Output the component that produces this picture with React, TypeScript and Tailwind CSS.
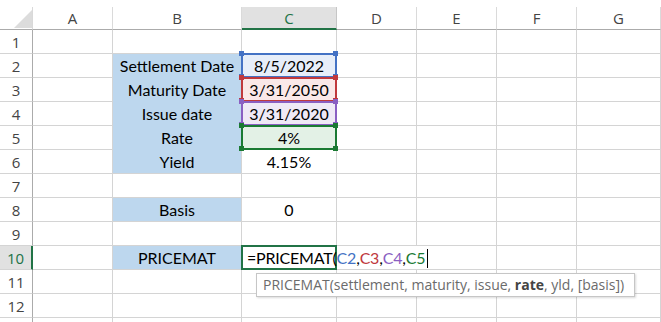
import React from 'react'

const cols = [
  { key: 'hdr', w: 'w-[33px]' },
  { key: 'A', w: 'w-[80px]' },
  { key: 'B', w: 'w-[129px]' },
  { key: 'C', w: 'w-[95px]' },
  { key: 'D', w: 'w-[80px]' },
  { key: 'E', w: 'w-[80px]' },
  { key: 'F', w: 'w-[80px]' },
  { key: 'G', w: 'w-[84px]' },
]

const labels: Record<number, string> = {
  2: 'Settlement Date',
  3: 'Maturity Date',
  4: 'Issue date',
  5: 'Rate',
  6: 'Yield',
  8: 'Basis',
  10: 'PRICEMAT',
}

const values: Record<number, string> = {
  2: '8/5/2022',
  3: '3/31/2050',
  4: '3/31/2020',
  5: '4%',
  6: '4.15%',
  8: '0',
}

// range highlight per row in column C
const ranges: Record<number, { bg: string; border: string; handle: string }> = {
  2: { bg: 'bg-[#e7eef9]', border: 'border-[#4472c4]', handle: 'bg-[#4472c4]' },
  3: { bg: 'bg-[#fae8e8]', border: 'border-[#c0393d]', handle: 'bg-[#c0393d]' },
  4: { bg: 'bg-[#efe9f6]', border: 'border-[#8a5fc2]', handle: 'bg-[#8a5fc2]' },
  5: { bg: 'bg-[#e3f1e6]', border: 'border-[#1a7a33]', handle: 'bg-[#1a7a33]' },
}

const cellFont = "font-['Lato','Liberation_Sans',sans-serif] text-[16px] leading-[22px] text-black"
const hdrFont = "font-['Open_Sans','Liberation_Sans',sans-serif] text-[15px]"

function RangeBox({ border, handle }: { border: string; handle: string }) {
  return (
    <>
      <div className={`absolute -left-px -top-px w-[96px] h-[25px] border-2 ${border} z-10`} />
      <div className={`absolute -left-[3px] -top-[3px] w-[5px] h-[5px] ${handle} z-10`} />
      <div className={`absolute left-[91px] -top-[3px] w-[5px] h-[5px] ${handle} z-10`} />
      <div className={`absolute -left-[3px] top-[20px] w-[5px] h-[5px] ${handle} z-10`} />
      <div className={`absolute left-[91px] top-[20px] w-[5px] h-[5px] ${handle} z-10`} />
    </>
  )
}

function FormulaCell() {
  return (
    <>
      {/* edit box covers gridlines of the cells the formula runs into */}
      <div className="absolute left-0 top-0 h-[23px] w-[190px] bg-white z-20" />
      <div className="absolute -left-px -top-px w-[96px] h-[25px] border-2 border-[#217346] z-30" />
      <div className={`absolute left-0 top-0 h-[23px] z-[35] flex items-end pl-[5px] whitespace-nowrap tracking-[-0.2px] ${cellFont}`}>
        <span>=PRICEMAT(</span>
        <span className="text-[#4472c4]">C2</span>
        <span>,</span>
        <span className="text-[#c0393d]">C3</span>
        <span>,</span>
        <span className="text-[#8a5fc2]">C4</span>
        <span>,</span>
        <span className="text-[#1a7a33]">C5</span>
        <span className="inline-block w-px h-[19px] bg-black ml-[2px] mb-[1px]" />
      </div>
      {/* function tooltip */}
      <div className="absolute left-[14px] top-[27px] h-[24px] w-[379px] bg-white border border-[#c6c6c6] shadow-[1px_1px_2px_rgba(0,0,0,0.15)] z-40 flex items-center pl-[6px] whitespace-nowrap font-['Open_Sans','Liberation_Sans',sans-serif] text-[14px] text-[#6b6b6b]">
        PRICEMAT(settlement, maturity, issue,&nbsp;<b className="text-[#444] font-bold">rate</b>, yld, [basis])
      </div>
    </>
  )
}

export default function App() {
  const rows = Array.from({ length: 13 }, (_, i) => i + 1)

  return (
    <div className="w-[661px] h-[322px] overflow-hidden bg-white">
      <div className="h-[7px]" />

      {/* column headers */}
      <div className="flex h-[23px]">
        {cols.map((c) => {
          if (c.key === 'hdr') {
            return (
              <div key={c.key} className={`${c.w} shrink-0 relative border-r border-b border-r-[#d9d9d9] border-b-[#ababab]`}>
                <svg className="absolute left-[14px] top-[3px]" width="18" height="18" viewBox="0 0 18 18">
                  <polygon points="18,0 18,18 0,18" fill="#dcdcdc" />
                </svg>
              </div>
            )
          }
          const active = c.key === 'C'
          return (
            <div
              key={c.key}
              className={`${c.w} shrink-0 flex items-center justify-center pt-[1px] ${hdrFont} ${
                active
                  ? 'bg-[#e1e1e1] text-[#217346] border-r border-r-[#c6c6c6] border-b-2 border-b-[#217346]'
                  : 'text-[#444] border-r border-r-[#dadada] border-b border-b-[#ababab]'
              }`}
            >
              {c.key}
            </div>
          )
        })}
      </div>

      {/* sheet rows */}
      {rows.map((r) => (
        <div key={r} className="flex h-[24px]">
          {cols.map((c) => {
            if (c.key === 'hdr') {
              const active = r === 10
              return (
                <div
                  key={c.key}
                  className={`${c.w} shrink-0 flex items-center justify-center pt-[1px] border-b border-b-[#d4d4d4] ${hdrFont} ${
                    active ? 'bg-[#e1e1e1] text-[#217346] border-r-2 border-r-[#217346]' : 'text-[#444] border-r border-r-[#ababab]'
                  }`}
                >
                  {r < 13 ? r : ''}
                </div>
              )
            }
            if (c.key === 'B') {
              const label = labels[r]
              return (
                <div
                  key={c.key}
                  className={`${c.w} shrink-0 flex items-end justify-center ${cellFont} ${
                    label ? 'bg-[#bdd7ee] border-r border-r-[#d4d4d4]' : 'border-r border-b border-[#d4d4d4]'
                  } ${label && (r === 6 || r === 8 || r === 10) ? 'border-b border-b-[#d4d4d4]' : ''} ${label && r < 6 ? 'border-b border-b-[#bdd7ee]' : ''}`}
                >
                  {label}
                </div>
              )
            }
            if (c.key === 'C') {
              const rg = ranges[r]
              return (
                <div
                  key={c.key}
                  className={`${c.w} shrink-0 relative flex items-end justify-center border-r border-b border-[#d4d4d4] ${cellFont} ${rg ? rg.bg : ''}`}
                >
                  {values[r]}
                  {rg && <RangeBox border={rg.border} handle={rg.handle} />}
                  {r === 10 && <FormulaCell />}
                </div>
              )
            }
            return <div key={c.key} className={`${c.w} shrink-0 border-r border-b border-[#d4d4d4]`} />
          })}
        </div>
      ))}
    </div>
  )
}
